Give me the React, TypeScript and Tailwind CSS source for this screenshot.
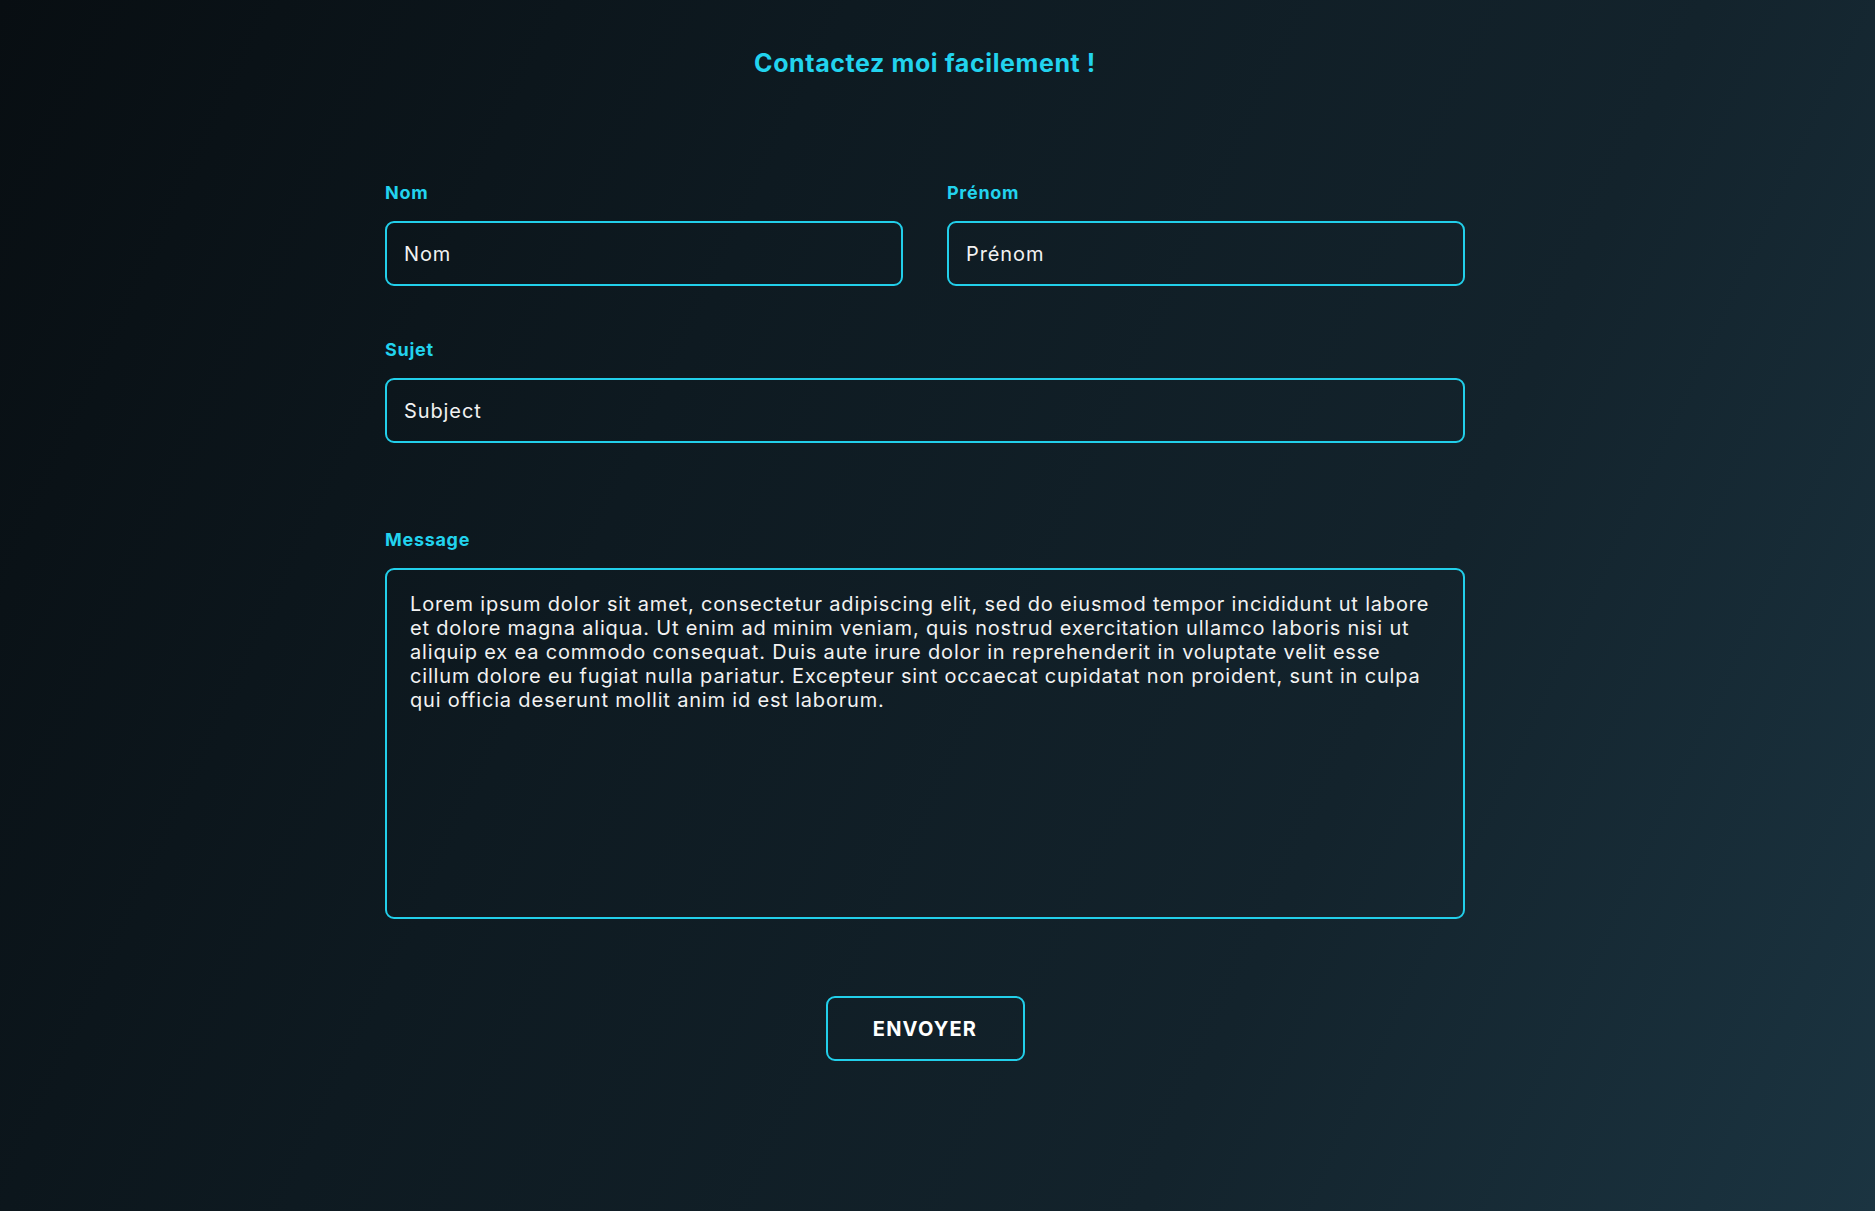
import React from "react";

const MSG =
  "Lorem ipsum dolor sit amet, consectetur adipiscing elit, sed do eiusmod tempor incididunt ut labore\net dolore magna aliqua. Ut enim ad minim veniam, quis nostrud exercitation ullamco laboris nisi ut\naliquip ex ea commodo consequat. Duis aute irure dolor in reprehenderit in voluptate velit esse\ncillum dolore eu fugiat nulla pariatur. Excepteur sint occaecat cupidatat non proident, sunt in culpa\nqui officia deserunt mollit anim id est laborum.";

function Label({ children }: { children: React.ReactNode }) {
  return (
    <label className="block text-[18px] leading-[22px] font-bold tracking-[0.7px] text-[#22d3ee] mb-[17px]">
      {children}
    </label>
  );
}

const inputCls =
  "w-full h-[65px] rounded-[9px] border-2 border-[#22cfea] bg-transparent px-[17px] text-[20px] tracking-[0.9px] text-[#f2f2f2] outline-none";

export default function App() {
  return (
    <div
      className="min-h-[1211px] w-full bg-[linear-gradient(115deg,#080e12_0%,#0e1a21_35%,#13232c_70%,#1b3441_100%)] text-white"
      style={{ fontFamily: "Inter, 'Noto Sans', sans-serif" }}
    >
      <div className="pr-[25px]">
        <div className="mx-auto w-[1080px] pt-[47px] flex flex-col">
          <h1 className="text-center text-[25px] leading-[32px] font-bold tracking-[0.6px] text-[#22d3ee]">
            Contactez moi facilement !
          </h1>

          <div className="mt-[103px] grid grid-cols-2 gap-[44px]">
            <div>
              <Label>Nom</Label>
              <input className={inputCls} defaultValue="Nom" />
            </div>
            <div>
              <Label>Prénom</Label>
              <input className={inputCls} defaultValue="Prénom" />
            </div>
          </div>

          <div className="mt-[53px]">
            <Label>Sujet</Label>
            <input className={inputCls} defaultValue="Subject" />
          </div>

          <div className="mt-[86px]">
            <Label>Message</Label>
            <textarea
              wrap="off"
              className="block w-full h-[351px] resize-none overflow-hidden rounded-[9px] border-2 border-[#22cfea] bg-transparent pl-[23px] pr-[10px] pt-[22px] text-[20px] leading-[24px] tracking-[0.82px] text-[#f2f2f2] outline-none"
              defaultValue={MSG}
            />
          </div>

          <div className="mt-[77px] flex justify-center">
            <button className="w-[199px] h-[65px] rounded-[9px] border-2 border-[#22cfea] bg-transparent text-[20px] font-bold tracking-[1.2px] text-white">
              ENVOYER
            </button>
          </div>
        </div>
      </div>
    </div>
  );
}
